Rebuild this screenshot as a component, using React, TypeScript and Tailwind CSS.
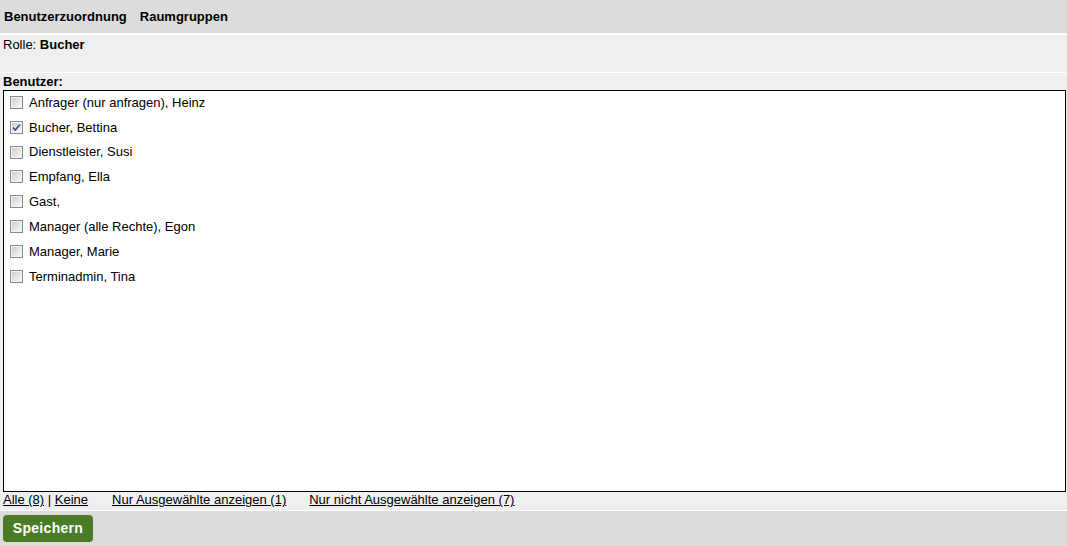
const benutzer = [
  { name: "Anfrager (nur anfragen), Heinz", checked: false },
  { name: "Bucher, Bettina", checked: true },
  { name: "Dienstleister, Susi", checked: false },
  { name: "Empfang, Ella", checked: false },
  { name: "Gast,", checked: false },
  { name: "Manager (alle Rechte), Egon", checked: false },
  { name: "Manager, Marie", checked: false },
  { name: "Terminadmin, Tina", checked: false },
];

function Checkbox({ checked }: { checked: boolean }) {
  return (
    <span className="flex h-[13px] w-[13px] shrink-0 items-center justify-center border border-[#8a8a8a] bg-white">
      <span className="flex h-[11px] w-[11px] items-center justify-center border border-[#f4f4f4] bg-gradient-to-br from-[#cfcfcf] to-[#f8f8f8]">
        {checked && (
          <svg width="9" height="9" viewBox="0 0 9 9">
            <path d="M1 4.5 L3.3 7 L8 1.5" fill="none" stroke="#3c4f8c" strokeWidth="1.6" />
          </svg>
        )}
      </span>
    </span>
  );
}

export default function App() {
  return (
    <div className="flex h-[546px] w-[1067px] flex-col bg-white font-['Liberation_Sans',Arial,sans-serif] text-[13px] text-black">
      <div className="flex h-[33px] items-center gap-[13px] bg-[#dcdcdc] pl-[4px] font-bold">
        <span>Benutzerzuordnung</span>
        <span>Raumgruppen</span>
      </div>

      <div className="mt-[2px] h-[37px] bg-[#efefef] pl-[3px]">
        Rolle: <span className="font-bold">Bucher</span>
      </div>

      <div className="mt-[1px] flex h-[437px] flex-col bg-[#efefef]">
        <p className="pl-[3px] pt-[1px] font-bold leading-[16px]">Benutzer:</p>
        <div className="ml-[3px] h-[402px] w-[1063px] border border-black bg-white">
          {benutzer.map((item) => (
            <label key={item.name} className="flex h-[24.85px] items-center gap-[6px] pb-[2px] pl-[6px]">
              <Checkbox checked={item.checked} />
              <span>{item.name}</span>
            </label>
          ))}
        </div>
        <div className="flex h-[18px] items-center pb-[2px] pl-[3px]">
          <span>
            <a className="underline">Alle (8)</a> | <a className="underline">Keine</a>
          </span>
          <a className="ml-6 underline">Nur Ausgewählte anzeigen (1)</a>
          <a className="ml-[23px] underline">Nur nicht Ausgewählte anzeigen (7)</a>
        </div>
      </div>

      <div className="mt-[1px] flex-1 bg-[#dcdcdc] pl-[3px] pt-[4px]">
        <button className="h-[27px] w-[90px] rounded-[4px] bg-[#4a7c27] text-[14px] font-bold tracking-[0.3px] text-white">
          Speichern
        </button>
      </div>
    </div>
  );
}
